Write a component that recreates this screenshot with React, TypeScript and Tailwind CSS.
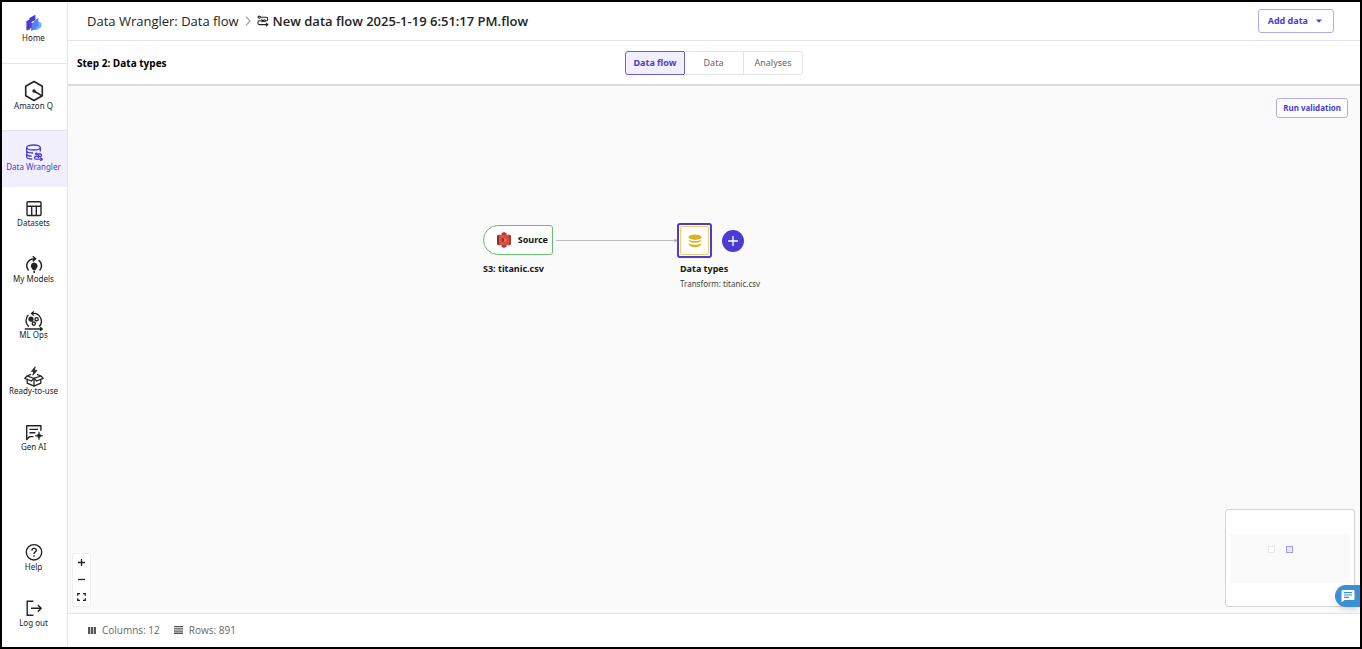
import type { ReactNode } from 'react';

type NavItem = {
  label: string;
  icon: ReactNode;
  active?: boolean;
};

const HomeIcon = () => (
  <svg width="18" height="18" viewBox="0 0 18 18">
    <path d="M9.800 10.200l3.200-1.600V7.200L16.400 9v4l-3 2.200-3.600 1.200z" fill="#6fb0ff" />
    <path d="M6 9.600l3-1.600V6.400l4.400-2.200V12l-3 2v1.400L6 16.800z" fill="#5580f7" />
    <path d="M1.400 7.200l3-1.600V4l6-3.200v5L6.600 8v5.600l-1.800 1.200v.8l-3.400.8z" fill="#4a38d0" />
  </svg>
);

const AmazonQIcon = () => (
  <svg width="20" height="22" viewBox="0 0 20 22" className="-mb-0.5" fill="none" stroke="currentColor" strokeWidth="1.6">
    <path d="M10 1.5l8.3 4.8v9.4L10 20.5l-8.3-4.8V6.3z" strokeLinejoin="round" />
    <path d="M10 11l7.6 4.6" />
    <circle cx="10" cy="11" r="1.7" fill="currentColor" stroke="none" />
  </svg>
);

const WranglerIcon = () => (
  <svg width="18" height="18" viewBox="0 0 18 18" fill="none" stroke="currentColor" strokeWidth="1.3">
    <ellipse cx="8.500" cy="4.500" rx="6.800" ry="2.500" />
    <path d="M1.700 4.500v9.300c0 1.300 2.400 2.300 5.600 2.400M15.300 4.500v4M1.700 7.800c.3 1.200 3 2.200 6.400 2.200M1.700 11c.3 1.200 2.400 2.100 5 2.200" />
    <path d="M9.800 11h5.500c1.600 0 1.600 2.400 0 2.400h-4.500c-1.700 0-1.700 2.800 0 2.800h5" />
    <path d="M11.500 9.400v3.200M13.500 11.800v3.200M15.200 14.600l2 1.600-2 1.600" strokeWidth="1.500" />
  </svg>
);

const DatasetsIcon = () => (
  <svg width="18" height="18" viewBox="0 0 18 18" fill="none" stroke="currentColor" strokeWidth="1.4">
    <rect x="2" y="2.700" width="14" height="13.800" rx="1" />
    <path d="M2 7.300h14M6.700 7.300v9.200M11.300 7.300v9.200" />
  </svg>
);

const ModelsIcon = () => (
  <svg width="18" height="18" viewBox="0 0 18 18" fill="none" stroke="currentColor" strokeWidth="1.500">
    <path d="M3.600 15.600C-.2 11 1.800 4 10 3.800M7.800 1.200l2.800 2.600-2.800 2.600M13.600 5.200c3.400 2.600 4 7 1 10.400" />
    <path d="M9.200 7.600a3.500 3.500 0 0 1 2 6.300l-.9 1.300H8.100l-.9-1.300a3.500 3.500 0 0 1 2-6.300z" fill="currentColor" stroke="none" />
    <path d="M9.200 15.800v2.200" />
  </svg>
);

const OpsIcon = () => (
  <svg width="20" height="20" viewBox="0 0 20 20" className="-mb-0.5" fill="none" stroke="currentColor" strokeWidth="1.400">
    <path d="M4.800 15.600A7.800 7.800 0 0 1 4.400 4M8 2.600a7.800 7.800 0 0 1 7.200 13M9.800.6L7.600 2.600l2.200 2" />
    <path d="M.8 18h17M16 16.200l2.200 1.800-2.200 1.800" />
    <circle cx="7" cy="8.200" r="1.900" fill="currentColor" />
    <circle cx="12.600" cy="8.200" r="1.600" />
    <circle cx="9.800" cy="12.600" r="1.600" />
  </svg>
);

const ReadyIcon = () => (
  <svg width="20" height="22" viewBox="0 0 20 22" className="-mt-0.5 -mb-0.5" fill="none" stroke="currentColor" strokeWidth="1.300" strokeLinejoin="round">
    <path d="M11.200 1.800L7.400 6.400h2.400l-1 3.800L13 5.400h-2.600z" fill="currentColor" strokeWidth="0.800" />
    <path d="M7 9.400L3 11l7 2.400L17 11l-4-1.600" />
    <path d="M3 11L.8 13.400 7.400 16l2.600-2.600 2.600 2.600 6.600-2.600L17 11" />
    <path d="M3.200 14.800v3.400l6.800 3 6.800-3v-3.400M10 13.400v7.800" />
  </svg>
);

const GenAiIcon = () => (
  <svg width="18" height="18" viewBox="0 0 18 18" fill="none" stroke="currentColor" strokeWidth="1.400">
    <path d="M8.400 13.600H4.600L1.700 16.400V2.800h14.200v5" strokeLinejoin="round" />
    <path d="M4.400 6.400h8.600M4.400 9.800h6" />
    <path d="M14 8.800c.5 2.800 1 3.400 3.800 4-2.800.6-3.300 1.200-3.800 4-.5-2.800-1-3.400-3.800-4 2.800-.6 3.300-1.200 3.800-4z" fill="currentColor" strokeWidth="0.600" />
  </svg>
);

const HelpIcon = () => (
  <svg width="18" height="18" viewBox="0 0 18 18" fill="none" stroke="currentColor" strokeWidth="1.400">
    <circle cx="9" cy="9.300" r="7.700" />
    <path d="M6.900 7.500c0-2.900 4.400-2.800 4.400-.2 0 1.700-2.300 1.700-2.300 3.700M9 12.300v1.500" />
  </svg>
);

const LogoutIcon = () => (
  <svg width="18" height="18" viewBox="0 0 18 18" fill="none" stroke="currentColor" strokeWidth="1.400">
    <path d="M8.400 2.300H2.200v14h6.200M6 9.300h10M12.800 5.900l3.400 3.400-3.400 3.400" />
  </svg>
);

const FlowIcon = () => (
  <svg width="12" height="12" viewBox="0 0 12 12" fill="none" stroke="currentColor" strokeWidth="1.100">
    <circle cx="2.200" cy="2.200" r="1.100" />
    <path d="M3.300 2.200h6c1.900 0 1.900 3.600 0 3.600H8.200M6 5.800H2.400c-2 0-2 3.800 0 3.800h8M9 7.900l1.800 1.700L9 11.300" />
    <path d="M4.400 4.400L6 5.800 4.400 7.200" />
    <circle cx="7.400" cy="5.800" r="1" />
  </svg>
);

const S3Icon = () => (
  <svg width="14" height="16" viewBox="0 0 14 16">
    <path d="M0 3.500l2.500-1v11l-2.500-1z" fill="#8c3123" />
    <path d="M14 3.500l-2.500-1v11l2.500-1z" fill="#b13a30" />
    <path d="M2 2.500L7 4v8l-5 1.500z" fill="#e05243" />
    <path d="M12 2.500L7 4v8l5 1.500z" fill="#d64a3c" />
    <path d="M4.500 1.200L7 0l2.500 1.200v3L7 3.600l-2.500.6z" fill="#b13a30" />
    <path d="M4.500 14.800L7 16l2.500-1.200v-3L7 12.400l-2.500-.6z" fill="#b13a30" />
    <path d="M4.500 6.300L7 6v4l-2.500-.3z" fill="#a3362b" />
    <path d="M9.500 6.300L7 6v4l2.500-.3z" fill="#e8695b" />
  </svg>
);

const DatabaseIcon = () => (
  <svg width="14" height="14" viewBox="0 0 14 14" fill="#dfb21c">
    <ellipse cx="7" cy="3.200" rx="6.400" ry="2.700" />
    <path d="M.6 5.400c2.400 2.200 10.400 2.200 12.800 0 .4 4.400-13.200 4.400-12.800 0z" />
    <path d="M.6 9.200c2.400 2.200 10.400 2.200 12.800 0 .4 5.400-13.200 5.400-12.800 0z" />
  </svg>
);

const mainItems: NavItem[] = [
  { label: 'Data Wrangler', icon: <WranglerIcon />, active: true },
  { label: 'Datasets', icon: <DatasetsIcon /> },
  { label: 'My Models', icon: <ModelsIcon /> },
  { label: 'ML Ops', icon: <OpsIcon /> },
  { label: 'Ready-to-use', icon: <ReadyIcon /> },
  { label: 'Gen AI', icon: <GenAiIcon /> },
];

const footerItems: NavItem[] = [
  { label: 'Help', icon: <HelpIcon /> },
  { label: 'Log out', icon: <LogoutIcon /> },
];

const tabs = ['Data flow', 'Data', 'Analyses'];

function NavLink({ label, icon, active }: NavItem) {
  return (
    <a
      href="#"
      className={`flex h-14 flex-col items-center pt-3 pr-0.5 whitespace-nowrap ${
        active ? 'bg-[#f1effb] text-[#4b3bd0]' : 'text-[#232323]'
      }`}
    >
      {icon}
      {label}
    </a>
  );
}

function Sidebar() {
  return (
    <nav className="flex w-[66px] shrink-0 flex-col border-r border-[#e4e4e4] bg-white pb-1 text-[8px] leading-3 text-[#232323]">
      <a href="#" className="flex h-[62px] flex-col items-center border-b border-[#e4e4e4] pt-3 pr-0.5">
        <HomeIcon />
        Home
      </a>
      <a href="#" className="flex h-[67px] flex-col items-center border-b border-[#e4e4e4] pt-4 pr-0.5">
        <AmazonQIcon />
        Amazon Q
      </a>
      {mainItems.map((item) => (
        <NavLink key={item.label} {...item} />
      ))}
      <div className="mt-auto">
        {footerItems.map((item) => (
          <NavLink key={item.label} {...item} />
        ))}
      </div>
    </nav>
  );
}

function Canvas() {
  return (
    <main className="relative flex-1 overflow-hidden bg-[#fafafa]">
      <button className="absolute top-3 right-3 h-5 rounded-[3px] border border-[#b3a9ee] bg-white px-[6px] text-[8px] leading-3 font-bold text-[#4b3bd0]">
        Run validation
      </button>

      {/* Source node */}
      <div className="absolute top-[139px] left-[415px]">
        <div className="flex h-[30px] w-[70px] items-center justify-end gap-[7px] rounded-l-[15px] rounded-r-[3px] border border-[#68c06c] bg-white pr-1 text-[9px] leading-3 font-bold text-[#161616]">
          <S3Icon />
          Source
        </div>
        <p className="mt-2 text-[9px] leading-3 font-bold whitespace-nowrap text-[#161616]">S3: titanic.csv</p>
      </div>

      {/* Edge */}
      <svg className="absolute top-[152px] left-[488px]" width="122" height="5" viewBox="0 0 122 5">
        <path d="M0 2.500h120" stroke="#bdbdbd" />
        <path d="M118.500.5l3 2-3 2z" fill="#a8a8a8" />
      </svg>

      {/* Transform node */}
      <div className="absolute top-[137px] left-[609px]">
        <div className="flex items-center gap-[10px]">
          <div className="size-[35px] rounded-[3px] border-2 border-[#4b3bd0] bg-white p-px">
            <div className="flex size-full items-center justify-center rounded-xs border border-[#f3cf5c]">
              <DatabaseIcon />
            </div>
          </div>
          <button aria-label="Add step" className="flex size-[22px] items-center justify-center rounded-full bg-[#4b3bd0] text-white">
            <svg width="10" height="10" viewBox="0 0 10 10" stroke="currentColor" strokeWidth="1.300">
              <path d="M5 0v10M0 5h10" />
            </svg>
          </button>
        </div>
        <p className="mt-[5px] ml-[3px] text-[9px] leading-3 font-bold whitespace-nowrap text-[#161616]">Data types</p>
        <p className="mt-[3px] ml-[3px] text-[8px] leading-3 whitespace-nowrap text-[#444444]">Transform: titanic.csv</p>
      </div>

      {/* Zoom controls */}
      <div className="absolute bottom-[6px] left-1 flex w-[19px] flex-col rounded-xs border border-[#eeeeee] bg-white text-[#232323]">
        <button aria-label="Zoom in" className="flex h-[17px] items-center justify-center">
          <svg width="7" height="7" viewBox="0 0 7 7" stroke="currentColor" strokeWidth="1.300">
            <path d="M3.500 0v7M0 3.500h7" />
          </svg>
        </button>
        <button aria-label="Zoom out" className="flex h-[17px] items-center justify-center">
          <svg width="7" height="7" viewBox="0 0 7 7" stroke="currentColor" strokeWidth="1.300">
            <path d="M0 3.500h7" />
          </svg>
        </button>
        <button aria-label="Fit view" className="flex h-[18px] items-center justify-center">
          <svg width="9" height="8" viewBox="0 0 9 8" fill="none" stroke="currentColor" strokeWidth="1.300">
            <path d="M.7 2.700v-2h2.300M6 .7h2.300v2M8.300 5.300v2H6M3 7.300H.7v-2" />
          </svg>
        </button>
      </div>

      {/* Minimap */}
      <div className="absolute right-[5px] bottom-[6px] flex h-[98px] w-[130px] items-center rounded-[3px] border border-[#d2d2d2] bg-white px-1">
        <div className="flex h-[49px] flex-1 gap-[11px] bg-[#fafafa] pt-3 pl-[38px]">
          <div className="size-[7px] border border-[#e6e6e6] bg-white" />
          <div className="size-[7px] border border-[#a59be8] bg-[#e8e4fa]" />
        </div>
      </div>
      <button
        aria-label="Open chat"
        className="absolute right-0 bottom-[6px] flex h-[22px] w-[25px] items-center rounded-l-full bg-[#3b8fd4] pl-[6px] shadow-md"
      >
        <svg width="14" height="14" viewBox="0 0 14 14">
          <path d="M1.500 1h11a1 1 0 0 1 1 1v8a1 1 0 0 1-1 1H3.500L.5 13.500V2a1 1 0 0 1 1-1z" fill="#fff" />
          <path d="M3 3.700h8M3 6h8M3 8.300h5" stroke="#3b8fd4" strokeWidth="1.200" />
        </svg>
      </button>
    </main>
  );
}

export default function App() {
  return (
    <div className="flex h-screen border-2 border-black bg-white font-['Noto_Sans',sans-serif]">
      <Sidebar />
      <div className="flex min-w-0 flex-1 flex-col">
        <header className="flex h-[39px] shrink-0 items-center border-b border-[#e4e4e4] pr-[26px] pl-[19px] text-[13px] leading-5 text-[#232323]">
          <a href="#" className="font-['Open_Sans','Noto_Sans',sans-serif]">
            Data Wrangler: Data flow
          </a>
          <svg width="6" height="10" viewBox="0 0 6 10" className="mx-[6px]" fill="none" stroke="#a0a0a0" strokeWidth="1.200">
            <path d="M1 .6L5 5 1 9.400" />
          </svg>
          <FlowIcon />
          <h1 className="ml-1 font-['Open_Sans','Noto_Sans',sans-serif] font-semibold">New data flow 2025-1-19 6:51:17 PM.flow</h1>
          <button className="ml-auto flex h-6 items-center gap-2 rounded-[3px] border border-[#b3a9ee] px-[9px] text-[9px] leading-3 font-bold text-[#4b3bd0]">
            Add data
            <svg width="6" height="4" viewBox="0 0 6 4" className="mr-0.5" fill="currentColor">
              <path d="M0 .5h6L3 3.800z" />
            </svg>
          </button>
        </header>

        <div className="grid h-[45px] shrink-0 grid-cols-[1fr_auto_1fr] items-center border-b-2 border-[#dcdcdc] px-[9px]">
          <h2 className="font-['Open_Sans','Noto_Sans',sans-serif] text-[10px] leading-3 font-bold text-black">Step 2: Data types</h2>
          <div role="tablist" className="flex">
            {tabs.map((tab, i) => (
              <button
                key={tab}
                role="tab"
                aria-selected={i === 0}
                className={`h-6 w-[60px] border text-[9px] leading-3 whitespace-nowrap ${
                  i === 0
                    ? 'rounded-l-[3px] border-[#6d5fdb] bg-[#f1effb] font-bold text-[#4b3bd0]'
                    : '-ml-px border-l-0 border-[#e4e4e4] text-[#666666] last:rounded-r-[3px] last:border-l'
                }`}
              >
                {tab}
              </button>
            ))}
          </div>
        </div>

        <Canvas />

        <footer className="flex h-[34px] shrink-0 items-center border-t border-[#e4e4e4] px-5 pb-px font-['Open_Sans','Noto_Sans',sans-serif] text-[10px] leading-3 text-[#666666]">
          <svg width="8" height="7" viewBox="0 0 8 7" fill="#555555">
            <path d="M0 0h2.200v7H0zM2.900 0h2.200v7H2.900zM5.800 0H8v7H5.800z" />
          </svg>
          <span className="ml-[6px]">Columns: 12</span>
          <svg width="9" height="8" viewBox="0 0 9 8" className="ml-[14px]" fill="#555555">
            <path d="M0 0h9v1.300H0zM0 2.200h9v1.300H0zM0 4.400h9v1.300H0zM0 6.600h9v1.300H0z" />
          </svg>
          <span className="ml-[6px]">Rows: 891</span>
        </footer>
      </div>
    </div>
  );
}
